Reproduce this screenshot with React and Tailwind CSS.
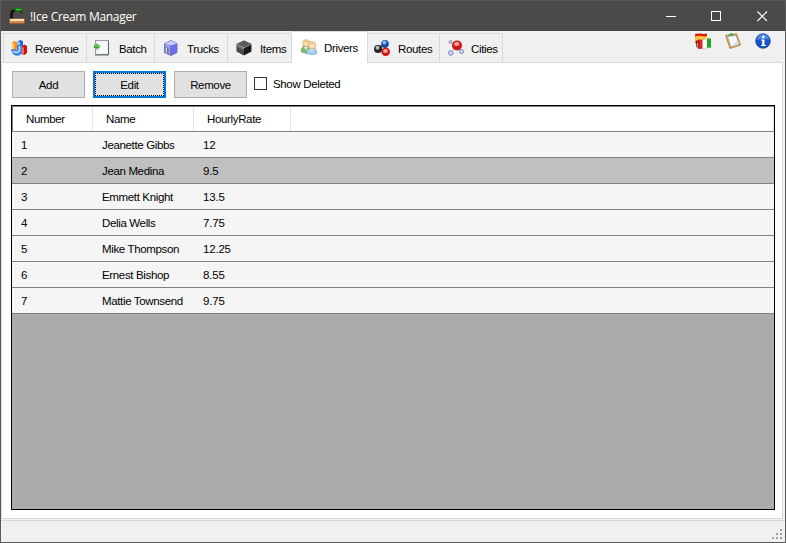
import React from "react";

function Icon({ children, className = "" }) {
  return (
    <svg width="16" height="16" viewBox="0 0 16 16" className={"block shrink-0 " + className}>
      {children}
    </svg>
  );
}

function AppIcon() {
  return (
    <Icon className="ml-2">
      <path d="M2.500 11V5.500Q3 2.500 7 1.500" fill="none" stroke="#101010" strokeWidth="2.400" />
      <path d="M4 1.500L7 0l5 .5 2 1.500-1.500 2L6 2.500z" fill="#0b8a12" />
      <path d="M7 1h4l1.500 1H7z" fill="#35d22c" />
      <path d="M10.500 3l3 .5-.5 1.500-2-.5z" fill="#202020" />
      <path d="M2 8l3 2.500H1z" fill="#161616" />
      <rect x=".5" y="10.500" width="15" height="5" fill="#c4763a" />
      <rect x="1" y="11" width="14" height="2" fill="#ffe0b8" />
      <path d="M1 14h14" stroke="#f0a25e" strokeDasharray="3 1" />
    </Icon>
  );
}

function RevenueIcon() {
  return (
    <Icon>
      <path d="M1 2.500L3 1l3 1v7L3 10 1 8z" fill="#f58b1d" />
      <path d="M1 2.500L3.500 3v7L1 8.500z" fill="#ffc75a" />
      <path d="M6.500 1.500L9 0l3 1v9H6.500z" fill="#2464d8" />
      <path d="M6.500 1.500l2.500.5v8H6.500z" fill="#8cc4ff" />
      <path d="M10.500 6.500l3-2L16 6v7l-2.500 2-3-1z" fill="#c81414" />
      <path d="M11 7l2 .5V14l-2-.5z" fill="#ff6a50" />
      <path d="M0 9.500l3-.5 3 1V5h5v6q0 4.500-5 4.800Q1 15.500 0 9.500z" fill="#3f7ee4" />
      <path d="M2 11.500q4 2 6.500-.5V6" fill="none" stroke="#b4dcff" strokeWidth="1.600" />
    </Icon>
  );
}

function BatchIcon() {
  return (
    <Icon>
      <rect x="1.500" y=".5" width="13" height="14" fill="#eef0f1" stroke="#9b9fa3" />
      <path d="M14.500 1v14H1" fill="none" stroke="#5e6265" />
      <path d="M3 2h10v11H6z" fill="#fafbfb" />
      <path d="M0 5h2.500V3L6.500 6.500l-4 3.500V8H0z" fill="#2da82d" />
      <path d="M1 6h3l1 .7" fill="none" stroke="#8be47b" />
    </Icon>
  );
}

function TruckIcon() {
  return (
    <Icon>
      <path d="M1.500 3.500L8 .5l6 3v9L8 15.500l-6.500-3z" fill="#6572d8" stroke="#5058a5" strokeWidth=".7" />
      <path d="M1.500 3.500L8 .8l6 2.700-6 2z" fill="#c9d0ff" />
      <path d="M1.800 4L8 6v9l-6.200-3z" fill="#98a2ee" />
      <path d="M7 6l6.700-2v8.300L7 15z" fill="#6872e6" />
      <path d="M2.500 7l3 1v6l-3-1.500z" fill="#e2e4ec" stroke="#666b99" strokeWidth=".7" />
      <path d="M4.500 8v5" stroke="#686c86" />
    </Icon>
  );
}

function ItemIcon() {
  return (
    <Icon>
      <path d="M.5 4L8 .5 15.500 4v7.500L8 15.500.5 11.500z" fill="#353535" />
      <path d="M1 4L8 .8 15 4 8 7.500z" fill="#5b5b5b" />
      <path d="M8 7.500L15 4v7.500L8 15z" fill="#191919" />
      <path d="M1 4.500L8 8v7l-7-3.500z" fill="#707070" />
      <path d="M1 7l7 3.500V15l-7-3.500z" fill="#494949" />
      <path d="M1 4.300L8 7.800l7-3.500" fill="none" stroke="#aaa" strokeWidth=".8" />
    </Icon>
  );
}

function DriversIcon() {
  return (
    <Icon>
      <path d="M.5 13Q0 7.500 4 7h3q3 1 3 6l-4 1.500z" fill="#7fbd59" stroke="#5f9850" strokeWidth=".7" />
      <path d="M3 8l2 3 2-3" fill="#e7f6dc" />
      <circle cx="5.200" cy="4.200" r="3.500" fill="#ffe0b8" stroke="#d79b57" strokeWidth=".7" />
      <path d="M2 4Q2 .5 5.500.5T8.500 4Q5 2.300 2 4z" fill="#f0c88c" />
      <path d="M5.500 14.500Q5.500 9.500 9 9h4q3 1 3 5.500-4 2-10.500 0z" fill="#a6d2f5" stroke="#6b9fd1" strokeWidth=".7" />
      <path d="M9 9.500l2 2.500 2-2.500" fill="#eef8ff" />
      <circle cx="11" cy="6.200" r="3.700" fill="#ffdfb8" stroke="#d79953" strokeWidth=".7" />
      <path d="M7.600 6Q7.800 2.500 11 2.500T14.400 6q-3.200-2-6.800 0z" fill="#f4c993" />
    </Icon>
  );
}

function RoutesIcon() {
  return (
    <Icon>
      <path d="M4 9l7-5v8z" fill="none" stroke="#454b50" strokeWidth="2.600" />
      <circle cx="11" cy="3.900" r="3.800" fill="#194da7" />
      <circle cx="10.500" cy="2.500" r="2" fill="#81bcf5" />
      <circle cx="4" cy="9" r="4" fill="#252525" />
      <circle cx="3.500" cy="7.800" r="2" fill="#b7bbbd" />
      <circle cx="11.700" cy="11.700" r="4.300" fill="#d31414" />
      <ellipse cx="11.500" cy="11" rx="2.300" ry="2" fill="#ffaaa4" />
    </Icon>
  );
}

function CitiesIcon() {
  return (
    <Icon>
      <path d="M3 2l5 4-5 7M8 6l6 6M9 5l5-3" fill="none" stroke="#a1a1a8" strokeDasharray="1 1" />
      <circle cx="9" cy="5.500" r="5" fill="#d11616" />
      <ellipse cx="8.700" cy="4" rx="2.700" ry="2" fill="#ffaaa2" />
      <circle cx="2.500" cy="2" r="1.500" fill="#c9ccf4" stroke="#777dbb" strokeWidth=".8" />
      <circle cx="2.800" cy="13" r="2.300" fill="#d5d8ff" stroke="#7176b8" strokeWidth=".9" />
      <circle cx="13.500" cy="11.500" r="2" fill="#d5d8ff" stroke="#7176b8" strokeWidth=".9" />
    </Icon>
  );
}

function FlagsIcon() {
  return (
    <Icon>
      <path d="M0 1Q3 0 6 .6T12 .5V9Q8 11 5 10l-4 1z" fill="#d91c12" />
      <path d="M.3 3.500q3-1.200 6-.4T12 3v3.500q-4 1-7 .5l-4.500.5z" fill="#ffc638" />
      <path d="M1 8l1.200 6.500" stroke="#8c2315" strokeWidth="1.200" />
      <path d="M3.500 6.500q3 1 6-.2T16 5.800v9q-3-.8-6 .5t-6.500.2z" fill="#fdfdfd" stroke="#aaa" strokeWidth=".5" />
      <path d="M3.500 6.500q2 .6 4 .2v9q-2 .4-4-.2z" fill="#e02424" />
      <path d="M12 5.800q2-.5 4 0v9q-2-.5-4 0z" fill="#22a52a" />
      <path d="M3.600 6.500V16" stroke="#7e3026" />
    </Icon>
  );
}

function ClipboardIcon() {
  return (
    <Icon>
      <path d="M.7 2.500L11.500.8l4 11.200-10.500 3.500z" fill="#eca53d" stroke="#b66f20" strokeWidth=".8" />
      <path d="M2.700 3.500l8.200-1 3 8.700-8 2.500z" fill="#f6faff" stroke="#8ba5c5" strokeWidth=".6" />
      <path d="M8 12l5-4.500 1 3.500-4 1.700z" fill="#c5def6" />
      <path d="M3.500 2.800L4 1l2-.7 1-.3 1.500 1.200.2 1.300-4.700.8z" fill="#43ad4f" />
    </Icon>
  );
}

function InfoIcon() {
  return (
    <Icon>
      <circle cx="8" cy="8" r="7.300" fill="#1557c9" stroke="#0b3b93" strokeWidth=".7" />
      <path d="M2 7Q2 1.300 8 1.300T14 7Q8 4.500 2 7z" fill="#4a86e2" />
      <circle cx="8.300" cy="4" r="1.400" fill="#fff" />
      <path d="M6 6.500h3.500V12H11v1H6v-1h1.200V7.500H6z" fill="#fff" />
    </Icon>
  );
}

const beforeTabs = [
  { label: "Revenue", icon: <RevenueIcon />, box: "w-[84px] border-l pl-[7px]", text: "ml-[8px]" },
  { label: "Batch", icon: <BatchIcon />, box: "w-[68px] pl-[7px]", text: "ml-[9px]" },
  { label: "Trucks", icon: <TruckIcon />, box: "w-[73px] pl-[8px]", text: "ml-[8px]" },
  { label: "Items", icon: <ItemIcon />, box: "w-[64px] pl-[8px]", text: "ml-[8px]" },
];

const afterTabs = [
  { label: "Routes", icon: <RoutesIcon />, box: "w-[73px] border-l pl-[6px]", text: "ml-[8px]" },
  { label: "Cities", icon: <CitiesIcon />, box: "w-[63px] pl-[8px]", text: "ml-[7px]" },
];

const rows = [
  ["1", "Jeanette Gibbs", "12"],
  ["2", "Jean Medina", "9.5"],
  ["3", "Emmett Knight", "13.5"],
  ["4", "Delia Wells", "7.75"],
  ["5", "Mike Thompson", "12.25"],
  ["6", "Ernest Bishop", "8.55"],
  ["7", "Mattie Townsend", "9.75"],
];

function Tab({ tab }) {
  return (
    <div className={"mt-0.5 flex h-[29px] items-center border-t border-r border-[#d9d9d9] " + tab.box}>
      {tab.icon}
      <span className={"pt-px whitespace-nowrap " + tab.text}>{tab.label}</span>
    </div>
  );
}

function TitleBar() {
  return (
    <header className="flex h-[30px] shrink-0 items-center bg-[#4c4a48] text-white">
      <AppIcon />
      <h1 className="ml-[5px] pt-px font-['Open_Sans','Noto_Sans',sans-serif] text-[12px] tracking-[-0.3px]">!Ice Cream Manager</h1>
      <svg width="102" height="11" viewBox="0 0 102 11" className="mr-[17px] ml-auto" fill="none" stroke="#fff">
        <path d="M0 5.500h10M45.500.5h9v9h-9z" shapeRendering="crispEdges" />
        <path d="M91.500.5l9.500 9.500M101 .5L91.500 10" strokeWidth="1.100" />
      </svg>
    </header>
  );
}

function Grid() {
  return (
    <section className="mt-[7px] mr-[7px] ml-[9px] h-[405px] border border-black bg-[#ababab]">
      <div className="flex h-[26px] items-center border-t border-b border-l border-[#808080] bg-white">
        <div className="flex h-full w-[80px] items-center border-r border-[#e5e5e5] pl-[13px]">Number</div>
        <div className="flex h-full w-[101px] items-center border-r border-[#e5e5e5] pl-[13px]">Name</div>
        <div className="flex h-full w-[97px] items-center border-r border-[#e5e5e5] pl-[13px]">HourlyRate</div>
        <div className="h-full flex-1 border-r border-[#e5e5e5]" />
      </div>
      {rows.map(([number, name, rate]) => (
        <div
          key={number}
          className={"flex h-[26px] items-center border-b border-[#808080] pt-px " + (number === "2" ? "bg-[#c0c0c0]" : "bg-[#f5f5f5]")}
        >
          <span className="w-[81px] pl-[9px]">{number}</span>
          <span className="w-[101px] pl-[9px]">{name}</span>
          <span className="pl-[9px] tracking-[-0.2px]">{rate}</span>
        </div>
      ))}
    </section>
  );
}

export default function App() {
  return (
    <div className="flex h-[543px] w-[786px] flex-col border border-[#5a5a5a] bg-[#f0f0f0] font-['Liberation_Sans',Arial,sans-serif] text-[11.5px] leading-4 tracking-[-0.35px] text-black">
      <TitleBar />
      <div className="relative flex h-[31px] shrink-0 pl-[2px]">
        {beforeTabs.map((tab) => (
          <Tab key={tab.label} tab={tab} />
        ))}
        <div className="relative z-10 flex h-[32px] w-[76px] items-center border-t border-r border-[#d9d9d9] bg-white pb-px pl-[9px]">
          <DriversIcon />
          <span className="ml-[7px] pt-px">Drivers</span>
        </div>
        <div className="-ml-px flex">
          {afterTabs.map((tab) => (
            <Tab key={tab.label} tab={tab} />
          ))}
        </div>
        <div className="mt-[2px] mr-[14px] ml-auto flex gap-[14px]">
          <FlagsIcon />
          <ClipboardIcon />
          <InfoIcon />
        </div>
      </div>
      <main className="h-[457px] w-[782px] shrink-0 border border-[#d9d9d9] bg-white">
        <div className="mt-2 ml-[10px] flex h-[27px]">
          <button className="w-[73px] border border-[#adadad] bg-[#e1e1e1] pt-px">Add</button>
          <button className="ml-[8px] w-[73px] border-2 border-[#0078d7] bg-[#e1e1e1]">
            <span className="flex h-full items-center justify-center border border-dotted border-black pt-px">Edit</span>
          </button>
          <button className="ml-[8px] w-[73px] border border-[#adadad] bg-[#e1e1e1] pt-px">Remove</button>
          <label className="ml-[7px] flex h-[25px] items-center">
            <span className="size-[13px] border border-[#333] bg-white" />
            <span className="ml-[6px] pt-px">Show Deleted</span>
          </label>
        </div>
        <Grid />
      </main>
      <footer className="mt-px flex flex-1 items-end justify-end border-t border-[#d7d7d7]">
        <svg width="11" height="11" viewBox="0 0 11 11" className="mr-[2px] mb-[2px]" fill="#a0a0a0" shapeRendering="crispEdges">
          <path d="M8 0h2v2H8zM4 4h2v2H4zM8 4h2v2H8zM0 8h2v2H0zM4 8h2v2H4zM8 8h2v2H8z" />
        </svg>
      </footer>
    </div>
  );
}
